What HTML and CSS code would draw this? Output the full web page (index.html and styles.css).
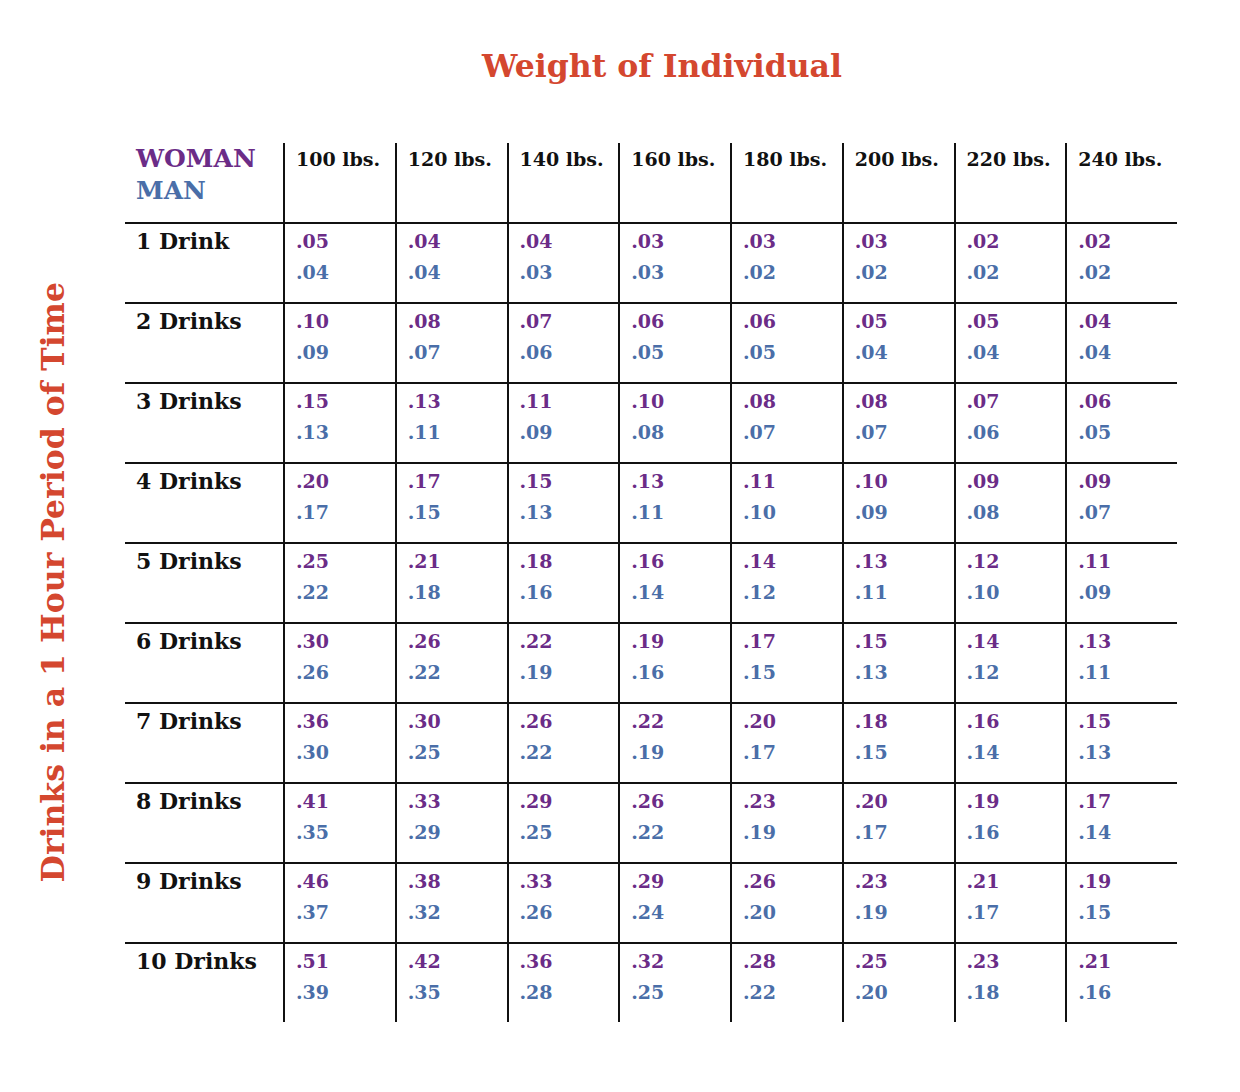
FILE: index.html
```html
<!DOCTYPE html>
<html>
<head>
<meta charset="utf-8">
<link rel="stylesheet" href="styles.css">
</head>
<body>
<div class="page">
  <h1 class="title">Weight of Individual</h1>
  <div class="main">
    <div class="side"><span class="side-label">Drinks in a 1 Hour Period of Time</span></div>
    <div class="chart">
      <div class="row head">
        <div class="label"><span class="w">WOMAN</span><span class="m">MAN</span></div>
        <div class="cell">100 lbs.</div><div class="cell">120 lbs.</div><div class="cell">140 lbs.</div><div class="cell">160 lbs.</div>
        <div class="cell">180 lbs.</div><div class="cell">200 lbs.</div><div class="cell">220 lbs.</div><div class="cell">240 lbs.</div>
      </div>
      <div class="row">
        <div class="label">1 Drink</div>
        <div class="cell"><span class="w">.05</span><span class="m">.04</span></div>
        <div class="cell"><span class="w">.04</span><span class="m">.04</span></div>
        <div class="cell"><span class="w">.04</span><span class="m">.03</span></div>
        <div class="cell"><span class="w">.03</span><span class="m">.03</span></div>
        <div class="cell"><span class="w">.03</span><span class="m">.02</span></div>
        <div class="cell"><span class="w">.03</span><span class="m">.02</span></div>
        <div class="cell"><span class="w">.02</span><span class="m">.02</span></div>
        <div class="cell"><span class="w">.02</span><span class="m">.02</span></div>
      </div>
      <div class="row">
        <div class="label">2 Drinks</div>
        <div class="cell"><span class="w">.10</span><span class="m">.09</span></div>
        <div class="cell"><span class="w">.08</span><span class="m">.07</span></div>
        <div class="cell"><span class="w">.07</span><span class="m">.06</span></div>
        <div class="cell"><span class="w">.06</span><span class="m">.05</span></div>
        <div class="cell"><span class="w">.06</span><span class="m">.05</span></div>
        <div class="cell"><span class="w">.05</span><span class="m">.04</span></div>
        <div class="cell"><span class="w">.05</span><span class="m">.04</span></div>
        <div class="cell"><span class="w">.04</span><span class="m">.04</span></div>
      </div>
      <div class="row">
        <div class="label">3 Drinks</div>
        <div class="cell"><span class="w">.15</span><span class="m">.13</span></div>
        <div class="cell"><span class="w">.13</span><span class="m">.11</span></div>
        <div class="cell"><span class="w">.11</span><span class="m">.09</span></div>
        <div class="cell"><span class="w">.10</span><span class="m">.08</span></div>
        <div class="cell"><span class="w">.08</span><span class="m">.07</span></div>
        <div class="cell"><span class="w">.08</span><span class="m">.07</span></div>
        <div class="cell"><span class="w">.07</span><span class="m">.06</span></div>
        <div class="cell"><span class="w">.06</span><span class="m">.05</span></div>
      </div>
      <div class="row">
        <div class="label">4 Drinks</div>
        <div class="cell"><span class="w">.20</span><span class="m">.17</span></div>
        <div class="cell"><span class="w">.17</span><span class="m">.15</span></div>
        <div class="cell"><span class="w">.15</span><span class="m">.13</span></div>
        <div class="cell"><span class="w">.13</span><span class="m">.11</span></div>
        <div class="cell"><span class="w">.11</span><span class="m">.10</span></div>
        <div class="cell"><span class="w">.10</span><span class="m">.09</span></div>
        <div class="cell"><span class="w">.09</span><span class="m">.08</span></div>
        <div class="cell"><span class="w">.09</span><span class="m">.07</span></div>
      </div>
      <div class="row">
        <div class="label">5 Drinks</div>
        <div class="cell"><span class="w">.25</span><span class="m">.22</span></div>
        <div class="cell"><span class="w">.21</span><span class="m">.18</span></div>
        <div class="cell"><span class="w">.18</span><span class="m">.16</span></div>
        <div class="cell"><span class="w">.16</span><span class="m">.14</span></div>
        <div class="cell"><span class="w">.14</span><span class="m">.12</span></div>
        <div class="cell"><span class="w">.13</span><span class="m">.11</span></div>
        <div class="cell"><span class="w">.12</span><span class="m">.10</span></div>
        <div class="cell"><span class="w">.11</span><span class="m">.09</span></div>
      </div>
      <div class="row">
        <div class="label">6 Drinks</div>
        <div class="cell"><span class="w">.30</span><span class="m">.26</span></div>
        <div class="cell"><span class="w">.26</span><span class="m">.22</span></div>
        <div class="cell"><span class="w">.22</span><span class="m">.19</span></div>
        <div class="cell"><span class="w">.19</span><span class="m">.16</span></div>
        <div class="cell"><span class="w">.17</span><span class="m">.15</span></div>
        <div class="cell"><span class="w">.15</span><span class="m">.13</span></div>
        <div class="cell"><span class="w">.14</span><span class="m">.12</span></div>
        <div class="cell"><span class="w">.13</span><span class="m">.11</span></div>
      </div>
      <div class="row">
        <div class="label">7 Drinks</div>
        <div class="cell"><span class="w">.36</span><span class="m">.30</span></div>
        <div class="cell"><span class="w">.30</span><span class="m">.25</span></div>
        <div class="cell"><span class="w">.26</span><span class="m">.22</span></div>
        <div class="cell"><span class="w">.22</span><span class="m">.19</span></div>
        <div class="cell"><span class="w">.20</span><span class="m">.17</span></div>
        <div class="cell"><span class="w">.18</span><span class="m">.15</span></div>
        <div class="cell"><span class="w">.16</span><span class="m">.14</span></div>
        <div class="cell"><span class="w">.15</span><span class="m">.13</span></div>
      </div>
      <div class="row">
        <div class="label">8 Drinks</div>
        <div class="cell"><span class="w">.41</span><span class="m">.35</span></div>
        <div class="cell"><span class="w">.33</span><span class="m">.29</span></div>
        <div class="cell"><span class="w">.29</span><span class="m">.25</span></div>
        <div class="cell"><span class="w">.26</span><span class="m">.22</span></div>
        <div class="cell"><span class="w">.23</span><span class="m">.19</span></div>
        <div class="cell"><span class="w">.20</span><span class="m">.17</span></div>
        <div class="cell"><span class="w">.19</span><span class="m">.16</span></div>
        <div class="cell"><span class="w">.17</span><span class="m">.14</span></div>
      </div>
      <div class="row">
        <div class="label">9 Drinks</div>
        <div class="cell"><span class="w">.46</span><span class="m">.37</span></div>
        <div class="cell"><span class="w">.38</span><span class="m">.32</span></div>
        <div class="cell"><span class="w">.33</span><span class="m">.26</span></div>
        <div class="cell"><span class="w">.29</span><span class="m">.24</span></div>
        <div class="cell"><span class="w">.26</span><span class="m">.20</span></div>
        <div class="cell"><span class="w">.23</span><span class="m">.19</span></div>
        <div class="cell"><span class="w">.21</span><span class="m">.17</span></div>
        <div class="cell"><span class="w">.19</span><span class="m">.15</span></div>
      </div>
      <div class="row">
        <div class="label">10 Drinks</div>
        <div class="cell"><span class="w">.51</span><span class="m">.39</span></div>
        <div class="cell"><span class="w">.42</span><span class="m">.35</span></div>
        <div class="cell"><span class="w">.36</span><span class="m">.28</span></div>
        <div class="cell"><span class="w">.32</span><span class="m">.25</span></div>
        <div class="cell"><span class="w">.28</span><span class="m">.22</span></div>
        <div class="cell"><span class="w">.25</span><span class="m">.20</span></div>
        <div class="cell"><span class="w">.23</span><span class="m">.18</span></div>
        <div class="cell"><span class="w">.21</span><span class="m">.16</span></div>
      </div>
    </div>
  </div>
</div>
</body>
</html>
```
FILE: styles.css
```css
html, body {
  margin: 0;
  padding: 0;
  background: #ffffff;
}
body {
  font-family: "DejaVu Serif", "Liberation Serif", serif;
  color: #111111;
}
.page {
  width: 1240px;
  padding-top: 48px;
}
.title {
  margin: 0;
  padding-left: 84px;
  text-align: center;
  font-family: "DejaVu Serif", serif;
  font-weight: bold;
  font-size: 31.5px;
  line-height: 36px;
  color: #d4472f;
}
.main {
  display: flex;
  margin-top: 59px;
}
.side {
  width: 125px;
  flex: none;
  display: flex;
  align-items: center;
  justify-content: flex-start;
  padding-left: 35px;
  box-sizing: border-box;
}
.side-label {
  writing-mode: vertical-rl;
  transform: rotate(180deg);
  font-family: "DejaVu Serif", serif;
  font-weight: bold;
  font-size: 31.5px;
  line-height: 36px;
  color: #d4472f;
  white-space: nowrap;
}
.chart {
  width: 1052px;
  flex: none;
}
.row {
  display: grid;
  grid-template-columns: 158px repeat(8, 1fr);
  height: 80px;
  box-sizing: border-box;
  border-top: 2px solid #111;
}
.row.head {
  height: 79px;
  border-top: none;
}
.label {
  padding: 3px 0 0 11px;
  font-weight: bold;
  font-size: 22px;
  line-height: 28px;
}
.head .label {
  padding-top: 0;
  font-size: 25px;
  line-height: 32px;
  display: flex;
  flex-direction: column;
}
.cell {
  border-left: 2px solid #111;
  padding: 2px 0 0 11px;
  font-weight: bold;
  font-size: 19px;
  line-height: 31px;
  display: flex;
  flex-direction: column;
}
.head .cell {
  padding-top: 1px;
}
.w {
  color: #6b2c87;
}
.m {
  color: #4a6ea8;
}
```
